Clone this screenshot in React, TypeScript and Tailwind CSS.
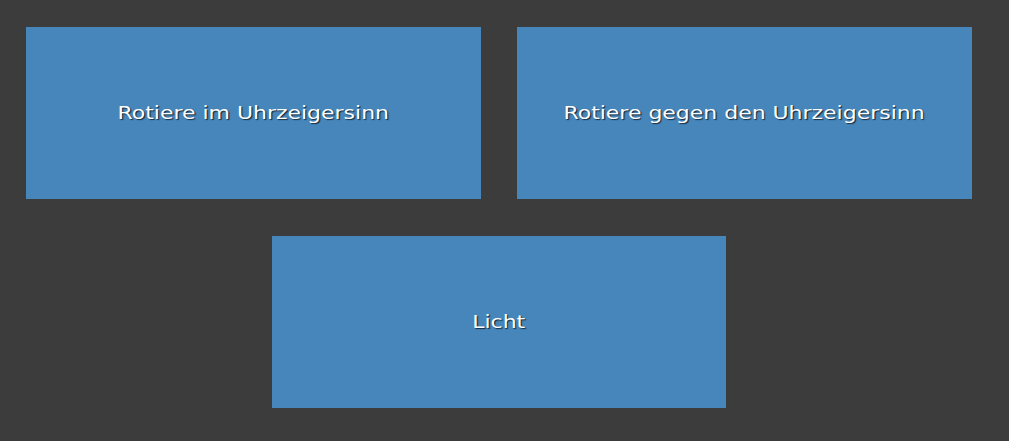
export default function App() {
  const base =
    "h-[172px] bg-[#4686bb] flex items-center justify-center text-white text-[18px] [text-shadow:1px_1px_1px_rgba(0,0,0,0.7)] font-['DejaVu_Sans',sans-serif]";
  const label = "inline-block scale-x-[1.22] whitespace-nowrap -translate-y-px";
  return (
    <div className="w-[1009px] h-[441px] bg-[#3c3c3c] overflow-hidden">
      <div className="w-[972px] pl-[26px] pt-[27px] flex flex-wrap justify-center gap-x-[36px] gap-y-[37px]">
        <div className={`w-[455px] ${base}`}><span className={label}>Rotiere im Uhrzeigersinn</span></div>
        <div className={`w-[455px] ${base}`}><span className={label}>Rotiere gegen den Uhrzeigersinn</span></div>
        <div className={`w-[454px] ${base}`}><span className={label}>Licht</span></div>
      </div>
    </div>
  );
}
